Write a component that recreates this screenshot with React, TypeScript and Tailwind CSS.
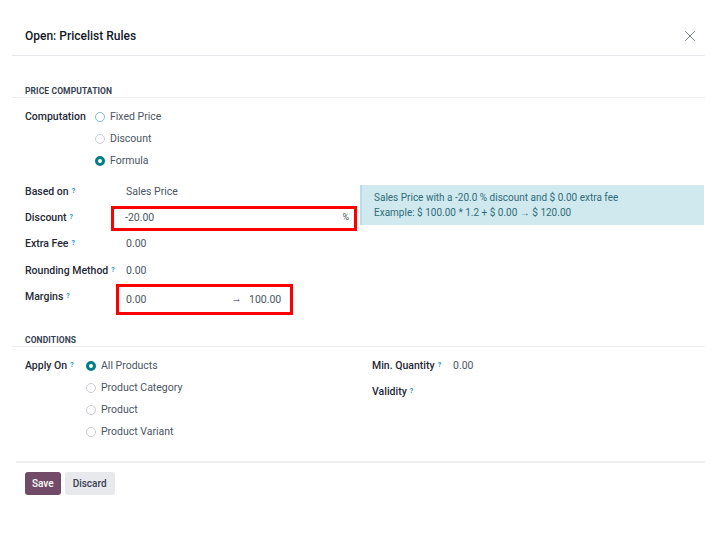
import { X } from 'lucide-react';

function Help() {
  return <sup className="ml-[3px] text-[7px] font-bold text-[#2b95c2] relative -top-[2px]">?</sup>;
}

function Radio({ checked, hint }: { checked?: boolean; hint?: boolean }) {
  if (checked) {
    return <span className="inline-block w-[10px] h-[10px] rounded-full border-[3px] border-[#017e84] bg-white" />;
  }
  return (
    <span
      className={
        'inline-block w-[10px] h-[10px] rounded-full border bg-white ' +
        (hint ? 'border-[#7dbfc3]' : 'border-[#c9ccd1]')
      }
    />
  );
}

function SectionTitle({ title }: { title: string }) {
  return (
    <div className="border-b border-[#eceef1] pl-[13px] pb-[1px]">
      <div className="text-[8.5px] leading-[10px] font-bold tracking-[0.1px] text-[#374151] uppercase">{title}</div>
    </div>
  );
}

function Row({ label, help, children, h = 26 }: { label: string; help?: boolean; children?: React.ReactNode; h?: number }) {
  return (
    <div className="flex items-center" style={{ height: h }}>
      <div className="w-[101px] shrink-0 text-[10.5px] font-medium text-[#1f2937]">
        {label}
        {help && <Help />}
      </div>
      <div className="flex-1 text-[10.5px] text-[#4b5563]">{children}</div>
    </div>
  );
}

export default function App() {
  const computation = [
    { label: 'Fixed Price', hint: true },
    { label: 'Discount' },
    { label: 'Formula', checked: true },
  ];
  const applyOn = [
    { label: 'All Products', checked: true },
    { label: 'Product Category' },
    { label: 'Product' },
    { label: 'Product Variant' },
  ];

  return (
    <div className="w-[720px] h-[540px] bg-white overflow-hidden font-['Roboto',sans-serif] text-[#374151]">
      {/* Header */}
      <div className="ml-[12px] w-[693px] h-[56px] border-b border-[#e5e7eb] flex items-center justify-between pl-[13px] pr-[6px] pt-[16px]">
        <span className="text-[12px] font-medium text-[#111827]">Open: Pricelist Rules</span>
        <X className="w-[18px] h-[18px] text-[#6b7280]" strokeWidth={1.2} />
      </div>

      {/* Price computation */}
      <div className="ml-[12px] w-[693px] pt-[30px]">
        <SectionTitle title="Price Computation" />

        <div className="pl-[13px] pt-[8px]">
          <div className="flex">
            <div className="w-[70px] shrink-0 h-[22px] flex items-center text-[10.5px] font-medium text-[#1f2937]">
              Computation
            </div>
            <div className="flex flex-col">
              {computation.map((c) => (
                <div key={c.label} className="h-[22px] flex items-center gap-[5px]">
                  <Radio checked={c.checked} hint={c.hint} />
                  <span className="text-[10.5px] text-[#4b5563]">{c.label}</span>
                </div>
              ))}
            </div>
          </div>

          <div className="flex mt-[7px]">
            <div className="w-[332px] shrink-0 flex flex-col">
              <Row label="Based on" help>Sales Price</Row>
              <Row label="Discount" help>
                <div className="-ml-[15px] h-[25px] border-[3px] border-[#ff0000] flex items-center justify-between pl-[11px] pr-[5px]">
                  <span>-20.00</span>
                  <span className="text-[9px]">%</span>
                </div>
              </Row>
              <Row label="Extra Fee" help>0.00</Row>
              <Row label="Rounding Method" help h={27}>0.00</Row>
              <Row label="Margins" help>
                <div className="-ml-[10px] w-[177px] h-[31px] mt-[5px] border-[3px] border-[#ff0000] flex items-center pl-[7px]">
                  <span className="w-[105px]">0.00</span>
                  <span className="w-[18px] text-[11px] font-bold text-[#374151]">→</span>
                  <span>100.00</span>
                </div>
              </Row>
            </div>
            <div className="ml-[3px] w-[344px] h-[40px] mt-[6px] bg-[#d0e9ee] border-l-[2px] border-[#bcdde4] pl-[12px] flex flex-col justify-center text-[10px] leading-[15px] text-[#2f6c7a]">
              <span>Sales Price with a -20.0 % discount and $ 0.00 extra fee</span>
              <span>Example: $ 100.00 * 1.2 + $ 0.00 → $ 120.00</span>
            </div>
          </div>
        </div>
      </div>

      {/* Conditions */}
      <div className="ml-[12px] w-[693px] pt-[25px]">
        <SectionTitle title="Conditions" />
        <div className="pl-[13px] pt-[8px] flex">
          <div className="w-[347px] shrink-0 flex">
            <div className="w-[61px] shrink-0 h-[22px] flex items-center text-[10.5px] font-medium text-[#1f2937]">
              <span>
                Apply On
                <Help />
              </span>
            </div>
            <div className="flex flex-col">
              {applyOn.map((c) => (
                <div key={c.label} className="h-[22px] flex items-center gap-[5px]">
                  <Radio checked={c.checked} />
                  <span className="text-[10.5px] text-[#4b5563]">{c.label}</span>
                </div>
              ))}
            </div>
          </div>
          <div className="flex flex-col">
            <div className="h-[22px] flex items-center">
              <span className="w-[81px] text-[10.5px] font-medium text-[#1f2937]">
                Min. Quantity
                <Help />
              </span>
              <span className="text-[10.5px] text-[#4b5563]">0.00</span>
            </div>
            <div className="h-[26px] flex items-center mt-[2px]">
              <span className="text-[10.5px] font-medium text-[#1f2937]">
                Validity
                <Help />
              </span>
            </div>
          </div>
        </div>
      </div>

      {/* Footer */}
      <div className="ml-[16px] w-[689px] mt-[18px] border-t-2 border-[#eef0f2] pl-[9px] pt-[9px] flex gap-[4px]">
        <button className="h-[23px] px-[7px] rounded-[3px] bg-[#714b67] text-white text-[10px] font-medium">Save</button>
        <button className="h-[23px] px-[8px] rounded-[3px] bg-[#e7e9ed] text-[#374151] text-[10px] font-medium">Discard</button>
      </div>
    </div>
  );
}
